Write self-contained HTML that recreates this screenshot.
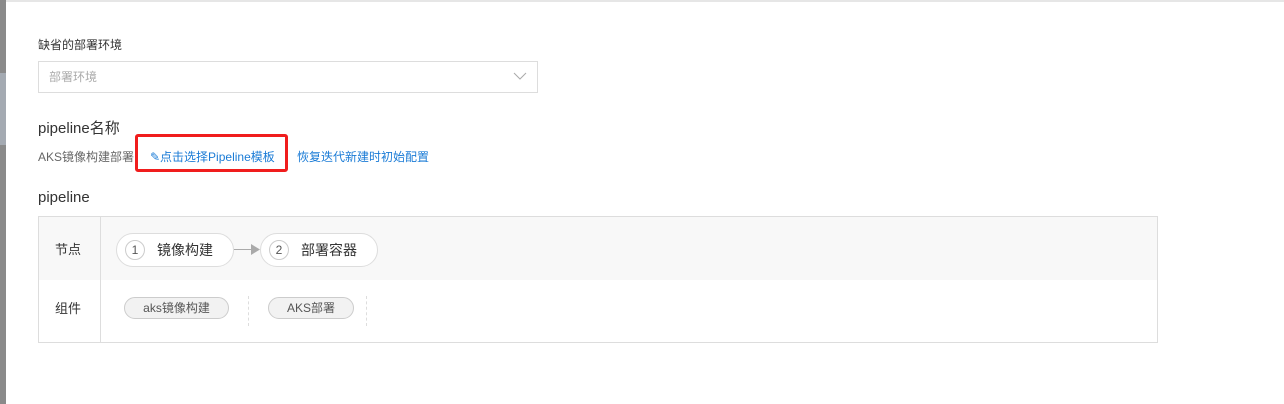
<!DOCTYPE html>
<html><head><meta charset="utf-8"><style>
*{margin:0;padding:0;box-sizing:border-box}
body{width:1284px;height:404px;background:#fff;position:relative;overflow:hidden;font-family:"Liberation Sans","Noto Sans CJK SC",sans-serif;color:#333}
.a{position:absolute}
.pill{position:absolute;border:1px solid #ddd;border-radius:17px;background:#fff;font-size:14px;color:#333;height:34px;line-height:32px}
.num{display:inline-block;width:20px;height:20px;border:1px solid #ccc;border-radius:50%;line-height:18px;text-align:center;font-size:12px;color:#555;margin:0 12px 0 8px;vertical-align:middle;position:relative;top:-1px}
.cp{position:absolute;border:1px solid #ccc;border-radius:11px;background:#f2f2f2;font-size:12px;color:#555;height:22px;line-height:20px;text-align:center}
.dash{position:absolute;border-left:1px dashed #ddd}
</style></head><body>
<div class="a" style="left:0;top:0;width:6px;height:404px;background:#8a8a8a"></div>
<div class="a" style="left:0;top:73px;width:6px;height:72px;background:#a4aab2"></div>
<div class="a" style="left:6px;top:0;width:1278px;height:2px;background:#e6e6e6"></div>
<div class="a" style="left:38px;top:36px;font-size:12px;color:#333">缺省的部署环境</div>
<div class="a" style="left:38px;top:61px;width:500px;height:32px;border:1px solid #ddd"></div>
<div class="a" style="left:49px;top:68px;font-size:12px;color:#aaa">部署环境</div>
<svg class="a" style="left:513px;top:71px" width="14" height="10"><path d="M1 2 L7 8 L13 2" fill="none" stroke="#aaa" stroke-width="1"/></svg>
<div class="a" style="left:38px;top:117px;font-size:15px;color:#333">pipeline名称</div>
<div class="a" style="left:38px;top:148px;font-size:12px;color:#666">AKS镜像构建部署</div>
<div class="a" style="left:135px;top:134px;width:153px;height:38px;border:3px solid #f01d1d;border-radius:3px"></div>
<div class="a" style="left:150px;top:148px;font-size:12px;color:#1a7bd6">✎点击选择Pipeline模板</div>
<div class="a" style="left:297px;top:148px;font-size:12px;color:#1a7bd6">恢复迭代新建时初始配置</div>
<div class="a" style="left:38px;top:189px;font-size:15px;color:#333">pipeline</div>
<div class="a" style="left:38px;top:216px;width:1120px;height:127px;border:1px solid #ddd"></div>
<div class="a" style="left:39px;top:217px;width:1118px;height:63px;background:#f8f8f8"></div>
<div class="a" style="left:100px;top:217px;width:1px;height:125px;background:#ddd"></div>
<div class="a" style="left:55px;top:239px;font-size:13px">节点</div>
<div class="a" style="left:55px;top:298px;font-size:13px">组件</div>
<div class="pill" style="left:116px;top:233px;width:118px"><span class="num">1</span>镜像构建</div>
<div class="a" style="left:234px;top:249px;width:22px;height:1px;background:#aaa"></div>
<svg class="a" style="left:251px;top:244px" width="10" height="11"><path d="M0 0 L9 5.5 L0 11Z" fill="#aaa"/></svg>
<div class="pill" style="left:260px;top:233px;width:118px"><span class="num">2</span>部署容器</div>
<div class="cp" style="left:124px;top:297px;width:105px">aks镜像构建</div>
<div class="dash" style="left:248px;top:296px;height:30px"></div>
<div class="cp" style="left:268px;top:297px;width:86px">AKS部署</div>
<div class="dash" style="left:366px;top:296px;height:30px"></div>
</body></html>
